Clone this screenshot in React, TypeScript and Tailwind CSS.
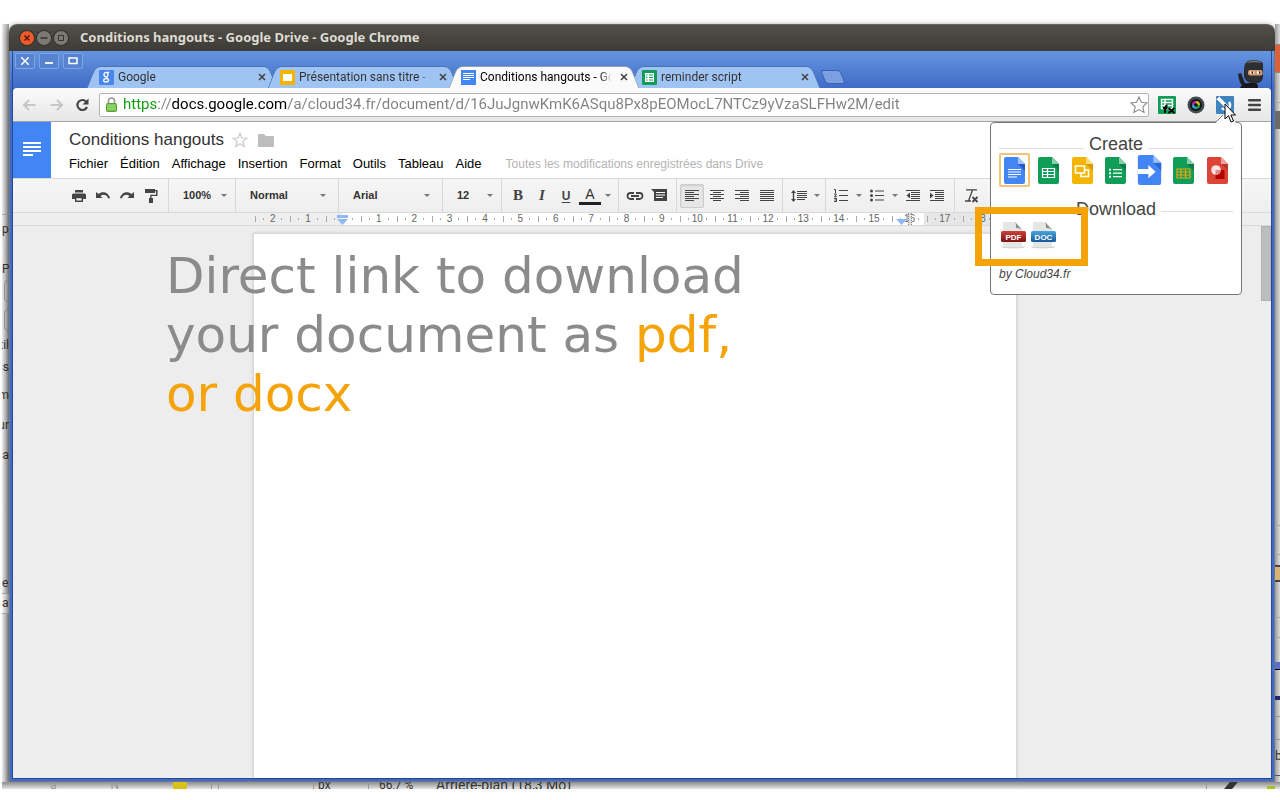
import type { ReactNode } from "react";

const ui = "font-['Roboto',sans-serif]";
const docs = "font-['Liberation_Sans',sans-serif]";

const createItems = [
  { label: "Document", color: "#4285f4", fold: "#a1c2fa", shade: "#2a56c6", art: "doc" },
  { label: "Spreadsheet", color: "#0f9d58", fold: "#87ceac", shade: "#0b7f47", art: "sheet" },
  { label: "Presentation", color: "#f4b400", fold: "#fada80", shade: "#d79c00", art: "slides" },
  { label: "Form", color: "#0f9d58", fold: "#87ceac", shade: "#0b7f47", art: "form" },
  { label: "Script", color: "#4285f4", fold: "#a1c2fa", shade: "#2a66d6", art: "script" },
  { label: "Fusion table", color: "#0f9d58", fold: "#87ceac", shade: "#0b7f47", art: "table" },
  { label: "Drawing", color: "#db4437", fold: "#eda29b", shade: "#b6392e", art: "drawing" },
];

const menus = ["Fichier", "Édition", "Affichage", "Insertion", "Format", "Outils", "Tableau", "Aide"];

const rulerLabels = ["2", "1", "", ...Array.from({ length: 18 }, (_, i) => String(i + 1))];

function Lines({ rows }: { rows: [number, number][] }) {
  return (
    <svg viewBox="0 0 14 12" className="h-3 w-3.5" fill="#444" shapeRendering="crispEdges">
      {rows.map(([x, w], i) => (
        <rect key={i} x={x} y={i * 2} width={w} height="1" />
      ))}
    </svg>
  );
}

function Caret() {
  return (
    <svg viewBox="0 0 6 3" className="h-[3px] w-1.5 shrink-0" fill="#777">
      <path d="M0 0h6L3 3z" />
    </svg>
  );
}

function Tool({ label, active, children }: { label: string; active?: boolean; children: ReactNode }) {
  return (
    <button
      aria-label={label}
      className={`flex h-6 w-6 shrink-0 items-center justify-center rounded-xs ${
        active ? "border border-[#ccc] bg-[#e6e6e6] shadow-[inset_0_1px_2px_rgba(0,0,0,0.1)]" : ""
      }`}
    >
      {children}
    </button>
  );
}

function CaretButton({ label }: { label: string }) {
  return (
    <button aria-label={label} className="flex h-6 w-3 shrink-0 items-center justify-center">
      <Caret />
    </button>
  );
}

function Picker({ label, value, className }: { label: string; value: string; className: string }) {
  return (
    <label className={`flex shrink-0 items-center border-r border-[#d8d8d8] pl-3.5 ${className}`}>
      <select aria-label={label} className="min-w-0 flex-1 appearance-none text-[11px] font-bold text-[#333]">
        <option>{value}</option>
      </select>
      <Caret />
    </label>
  );
}

function DocFavicon() {
  return (
    <svg viewBox="0 0 15 15" className="size-[15px] shrink-0" shapeRendering="crispEdges">
      <rect width="15" height="15" fill="#4285f4" />
      <path d="M2 3h11v1H2zM2 5h11v1H2zM2 7h11v1H2zM2 9h7v1H2z" fill="#fff" />
    </svg>
  );
}

function SheetFavicon() {
  return (
    <svg viewBox="0 0 15 15" className="size-[15px] shrink-0">
      <rect width="15" height="15" rx="1" fill="#0f9d58" />
      <path d="M3 3h9v9H3z" fill="#fff" />
      <path d="M4 4.500h1.500v1H4zM7 4.500h4v1H7zM4 7h1.500v1H4zM7 7h4v1H7zM4 9.500h1.500v1H4zM7 9.500h4v1H7z" fill="#0f9d58" />
    </svg>
  );
}

function SlidesFavicon() {
  return (
    <svg viewBox="0 0 15 15" className="size-[15px] shrink-0">
      <rect width="15" height="15" rx="1" fill="#f4b400" />
      <path d="M3 4h9v7H3z" fill="#fff" />
    </svg>
  );
}

function GoogleFavicon() {
  return (
    <svg viewBox="0 0 15 15" className="size-[15px] shrink-0">
      <rect width="15" height="15" rx="1" fill="#4a86ea" />
      <g fill="none" stroke="#fff" strokeWidth="1.300">
        <ellipse cx="7" cy="4.600" rx="2" ry="2.200" />
        <path d="M8 2.400h2.200M8 6.800c-1.500 1 1.800 1.600 1.600 3.500-.3 2.200-5 2.200-5 .2 0-1.500 2-2 4-1.800" />
      </g>
    </svg>
  );
}

function Tab({ icon, title, active }: { icon: ReactNode; title: string; active?: boolean }) {
  const side = active ? "border-[#8f9db5] bg-[#fafafa]" : "border-[#4a72b5] bg-[#9fc4f3]";
  return (
    <div className={`relative flex h-[22px] w-[181px] shrink-0 items-center pr-1.5 pl-2 ${active ? "z-10" : ""}`}>
      <div className={`absolute inset-y-0 left-0 w-1/2 -skew-x-[22deg] rounded-tl-md border-t border-l ${side}`} />
      <div className={`absolute inset-y-0 right-0 w-1/2 skew-x-[22deg] rounded-tr-md border-t border-r ${side}`} />
      <div className={`absolute inset-x-6 inset-y-0 border-t ${side}`} />
      <button className="relative flex min-w-0 flex-1 items-center gap-1">
        {icon}
        <span
          className={`min-w-0 flex-1 overflow-hidden mask-r-from-90% text-left text-[12px] leading-4 whitespace-nowrap ${
            active ? "text-black" : "text-[#333]"
          }`}
        >
          {title}
        </span>
      </button>
      <button aria-label="Close tab" className="relative ml-2 shrink-0">
        <svg viewBox="0 0 8 8" className="size-2" stroke="#444" strokeWidth="1.600">
          <path d="M1 1l6 6M7 1L1 7" />
        </svg>
      </button>
    </div>
  );
}

function Ninja() {
  return (
    <svg viewBox="0 0 28 28" className="h-7 w-7">
      <path d="M7 10c0-6 2-9 6-9.500 6-.6 12 .2 13 3v13c0 4-3 7-8 7-6 0-11-3-11-8z" fill="#2b2e33" />
      <path d="M9 3c4-3 12-3 16 0-5-1-10-1-16 0z" fill="#777" />
      <rect x="11" y="10" width="14.500" height="5.500" rx="2" fill="#d79a6d" />
      <path d="M13 11.500h4v2h-4zM20 11.500h4v2h-4z" fill="#fff" />
      <path d="M14.500 11.500h1.500v2h-1.500zM22 11.500h1.500v2H22z" fill="#111" />
      <path d="M1 14l3-1 3 8 2 3-3 3c-3-3-4-7-5-13z" fill="#222" />
      <path d="M3 28c2-4 6-5 10-5h6c2 1 2 3 2 5z" fill="#17181a" />
    </svg>
  );
}

function FileArt({ art }: { art: string }) {
  switch (art) {
    case "doc":
      return <path d="M4 12.500h13M4 15h13M4 17.500h13M4 20h9" stroke="#fff" strokeWidth="1.200" />;
    case "sheet":
      return <path d="M4.500 11.500h12v9h-12zM4.500 14.500h12M4.500 17.500h12M9.500 11.500v9" stroke="#fff" strokeWidth="1.200" fill="none" />;
    case "slides":
      return <path d="M3.500 9h9v7h-9zM9 16v3.500h7.500v-6.500h-4" stroke="#fff" strokeWidth="1.600" fill="none" />;
    case "form":
      return (
        <g fill="#fff">
          <path d="M8 12h9v1.300H8zM8 15.500h9v1.300H8zM8 19h9v1.300H8z" />
          <path d="M4 11.800h2v2H4zM4 15.200h2v2H4zM4 18.700h2v2H4z" />
        </g>
      );
    case "script":
      return <path d="M0 12.700h9.500V9l6.500 6-6.500 6v-4H0z" fill="#fff" />;
    case "table":
      return <path d="M4 12h13v9H4zM4 15h13M4 18h13M8 12v9M12.500 12v9" stroke="#e8a712" strokeWidth="1.200" fill="none" />;
    default:
      return (
        <g>
          <rect x="8.500" y="13" width="9" height="9" fill="#b50000" />
          <circle cx="9" cy="13" r="4.800" fill="#fbe3e1" />
          <path d="M8.500 17.800V13h5.300a4.800 4.800 0 0 1-5.300 4.800z" fill="#dc8b85" />
        </g>
      );
  }
}

function DownloadIcon({ text, from, to, id }: { text: string; from: string; to: string; id: string }) {
  return (
    <svg viewBox="0 0 26 28" className="h-7 w-[26px]">
      <defs>
        <linearGradient id={id} x1="0" y1="0" x2="0" y2="1">
          <stop offset="0" stopColor={from} />
          <stop offset="1" stopColor={to} />
        </linearGradient>
      </defs>
      <ellipse cx="13" cy="26" rx="12" ry="1.500" fill="#d5d5d5" />
      <path d="M3 1h13l6 7v18H3z" fill="#e6e6e6" />
      <path d="M15 1l7 8c-3-2-4-2-6-2 0-3 0-4-1-6z" fill="#8a8a8a" />
      <rect x="1" y="10" width="25" height="11" rx="1.500" fill={`url(#${id})`} />
      <text x="13.500" y="18.500" textAnchor="middle" fill="#fff" className="font-['Liberation_Sans',sans-serif] text-[8px] font-bold">
        {text}
      </text>
    </svg>
  );
}

function ExtensionPopup() {
  return (
    <div className={`absolute top-0 right-[29px] z-20 w-[252px] rounded-sm border border-[#777] bg-white px-2 pb-3 text-[#444] ${docs}`}>
      <svg viewBox="0 0 22 8" className="absolute -top-2 right-1 h-2 w-[22px]">
        <path d="M0 8l8-8 14 8z" fill="#fff" />
        <path d="M0 8l8-8" stroke="#777" />
      </svg>
      <div className="mt-[9px] flex items-center gap-[5px]">
        <hr className="mt-2 flex-1 border-[#ddd]" />
        <h2 className="text-[18px] leading-6">Create</h2>
        <hr className="mt-2 flex-1 border-[#ddd]" />
      </div>
      <div className="-mt-[3px] flex justify-between">
        {createItems.map((item, i) => (
          <button
            key={item.label}
            aria-label={item.label}
            className={`flex h-[34px] w-[31px] items-center justify-center rounded-xs ${i === 0 ? "border-2 border-[#f3c477]" : ""}`}
          >
            <svg viewBox="0 0 21 27" className={`shrink-0 ${item.art === "script" ? "h-[30px] w-[25px]" : "h-[27px] w-[21px]"}`}>
              <path d="M2 0h12l7 7v18a2 2 0 0 1-2 2H2a2 2 0 0 1-2-2V2a2 2 0 0 1 2-2z" fill={item.color} />
              <path d="M14 7h7v7z" fill={item.shade} />
              <path d="M14 0l7 7h-7z" fill={item.fold} />
              <FileArt art={item.art} />
            </svg>
          </button>
        ))}
      </div>
      <div className="mt-2.5 flex items-center gap-[5px]">
        <hr className="mt-1 flex-1 border-[#ddd]" />
        <h2 className="text-[18px] leading-6">Download</h2>
        <hr className="mt-1 flex-1 border-[#ddd]" />
      </div>
      <div className="flex gap-1 pl-px">
        <button aria-label="Download as PDF">
          <DownloadIcon id="pdf" text="PDF" from="#d0403b" to="#7d1213" />
        </button>
        <button aria-label="Download as DOC">
          <DownloadIcon id="doc" text="DOC" from="#4aa5de" to="#155a9c" />
        </button>
      </div>
      <p className="mt-[17px] text-[12px] leading-4 italic">
        by <a href="#cloud34">Cloud34.fr</a>
      </p>
      {/* Highlight around the download buttons */}
      <div className="absolute top-[84px] -left-4 h-[59px] w-[113px] border-[7px] border-[#f4a30b]" />
    </div>
  );
}

function TitleBar() {
  return (
    <div className="flex h-[27px] shrink-0 items-center rounded-t-lg border-t border-[#66645d] bg-linear-to-b from-[#504f48] to-[#3c3b37] pl-[11px]">
      <div className="flex gap-[3px]">
        <button aria-label="Close" className="size-3.5 rounded-full bg-[#ee5a2c] ring-1 ring-[#33322e]">
          <svg viewBox="0 0 14 14" stroke="#5a1c08" strokeWidth="1.500">
            <path d="M4.500 4.500l5 5M9.500 4.500l-5 5" />
          </svg>
        </button>
        <button aria-label="Minimize" className="size-3.5 rounded-full bg-[#7b7973] ring-1 ring-[#33322e]">
          <svg viewBox="0 0 14 14" stroke="#33322e" strokeWidth="1.500">
            <path d="M3.500 7h7" />
          </svg>
        </button>
        <button aria-label="Maximize" className="size-3.5 rounded-full bg-[#7b7973] ring-1 ring-[#33322e]">
          <svg viewBox="0 0 14 14" stroke="#33322e" fill="none">
            <path d="M4.500 4.500h5v5h-5z" />
          </svg>
        </button>
      </div>
      <h1 className="ml-3 font-['Noto_Sans',sans-serif] text-[13px] font-bold text-[#dfdbd2]">
        Conditions hangouts - Google Drive - Google Chrome
      </h1>
    </div>
  );
}

function TabStrip() {
  const frameButton = "flex h-4 w-5 items-center justify-center rounded-xs border border-[#7da3e0] bg-[#5583d0]";
  return (
    <div className="flex h-[37px] shrink-0 items-end">
      <div className="mt-[2px] flex gap-1 self-start pr-2 pl-0.5">
        <button aria-label="Close window" className={frameButton}>
          <svg viewBox="0 0 8 8" className="size-2" stroke="#fff" strokeWidth="1.500">
            <path d="M0 0l8 8M8 0L0 8" />
          </svg>
        </button>
        <button aria-label="Minimize window" className={frameButton}>
          <svg viewBox="0 0 8 8" className="size-2" stroke="#fff" strokeWidth="1.800">
            <path d="M0 6h8" />
          </svg>
        </button>
        <button aria-label="Restore window" className={frameButton}>
          <svg viewBox="0 0 10 8" className="h-2 w-2.5" stroke="#fff" strokeWidth="1.500" fill="none">
            <path d="M1 1h8v5.500H1z" />
          </svg>
        </button>
      </div>
      <Tab icon={<GoogleFavicon />} title="Google" />
      <Tab icon={<SlidesFavicon />} title="Présentation sans titre - G" />
      <Tab icon={<DocFavicon />} title="Conditions hangouts - Goo" active />
      <Tab icon={<SheetFavicon />} title="reminder script" />
      <button
        aria-label="New tab"
        className="mb-1 ml-2 h-3.5 w-5 skew-x-[22deg] rounded-[3px] border border-[#3a62b0] bg-[#7b9fe0]"
      />
      <div className="mr-1.5 ml-auto">
        <Ninja />
      </div>
    </div>
  );
}

function AddressBar() {
  return (
    <div className="relative flex h-[34px] shrink-0 items-center rounded-t-sm border-b border-[#a3a3a3] bg-linear-to-b from-[#fbfbfb] to-[#e6e6e6] pl-0.5">
      <button aria-label="Back" className="flex w-7 justify-center">
        <svg viewBox="0 0 14 12" className="h-3 w-3.5" stroke="#c6c6c6" strokeWidth="2" fill="none">
          <path d="M13.500 6H2M7 1L2 6l5 5" />
        </svg>
      </button>
      <button aria-label="Forward" className="flex w-7 justify-center">
        <svg viewBox="0 0 14 12" className="h-3 w-3.5" stroke="#c6c6c6" strokeWidth="2" fill="none">
          <path d="M.5 6H12M7 1l5 5-5 5" />
        </svg>
      </button>
      <button aria-label="Reload" className="flex w-7 justify-center">
        <svg viewBox="0 0 14 14" className="mr-1.5 size-3.5" fill="none">
          <path d="M11 3.500A5 5 0 1 0 12 9" stroke="#444" strokeWidth="2.200" />
          <path d="M13.500.5V6.500h-6z" fill="#444" />
        </svg>
      </button>
      <div className="flex h-6 min-w-0 flex-1 items-center rounded-xs border border-[#b5b5b5] bg-white pl-1.5">
        <svg viewBox="0 0 11 15" className="mr-1.5 h-[15px] w-[11px] shrink-0">
          <path d="M2.500 7V4a3 3 0 0 1 6 0v3" stroke="#999" strokeWidth="1.600" fill="none" />
          <rect x=".5" y="6.500" width="10" height="8" rx="1" fill="#7cc653" stroke="#55a12f" />
          <path d="M1.500 9h8M1.500 11.500h8" stroke="#a5dc85" />
        </svg>
        <input
          aria-label="Address"
          defaultValue="https://docs.google.com/a/cloud34.fr/document/d/16JuJgnwKmK6ASqu8Px8pEOMocL7NTCz9yVzaSLFHw2M/edit"
          className="min-w-0 flex-1 bg-[linear-gradient(90deg,#0a9a0a_35px,#808080_35px,#808080_49px,#000_49px,#000_164px,#808080_164px)] bg-clip-text text-[15px] text-transparent outline-none"
        />
        <button aria-label="Bookmark">
          <svg viewBox="0 0 18 18" className="size-[18px]" fill="#fff" stroke="#8a8a8a" strokeWidth="1.100">
            <path d="M9 1l2.400 5.300 5.700.6-4.300 3.900 1.200 5.700L9 13.600l-5 2.900 1.200-5.700L.9 6.900l5.700-.6z" />
          </svg>
        </button>
      </div>
      <div className="flex items-center gap-[11px] pr-2.5 pl-[9px]">
        <button aria-label="Spreadsheet functions">
          <svg viewBox="0 0 18 18" className="size-[18px]">
            <rect width="18" height="18" rx="1" fill="#0f9d58" />
            <path d="M3.500 3.500h11v9h-11zM3.500 6.500h11M3.500 9.500h11M7 3.500v9" fill="none" stroke="#fff" strokeWidth="1.400" />
            <path d="M9.500 9.500c-2 0-2.500 1-2.500 7.500M5 12h4.500M10.500 12l6 5M16.500 12l-6 5" stroke="#000" strokeWidth="1.900" fill="none" />
          </svg>
        </button>
        <button aria-label="Color picker">
          <svg viewBox="0 0 18 18" className="size-[18px]">
            <circle cx="9" cy="9" r="8.500" fill="#444a4e" />
            <circle cx="9" cy="9" r="6" fill="#15161a" />
            <path d="M9 9V5a4 4 0 0 1 4 4z" fill="#d8c21c" />
            <path d="M9 9h4a4 4 0 0 1-4 4z" fill="#20a050" />
            <path d="M9 9v4a4 4 0 0 1-4-4z" fill="#1cb5d8" />
            <path d="M9 9H5a4 4 0 0 1 4-4z" fill="#c923a8" />
            <circle cx="9" cy="9" r="1.800" fill="#111" />
          </svg>
        </button>
        <button aria-label="Cloud34 tools">
          <svg viewBox="0 0 18 18" className="size-[18px]">
            <rect width="18" height="18" rx="1" fill="#3f83c0" />
            <path d="M2 2l9 9" stroke="#fff" strokeWidth="3.500" />
            <path d="M0 4l4-4v4z" fill="#fff" />
            <path d="M13 6a4.500 4.500 0 1 1-7 6" fill="none" stroke="#fff" strokeWidth="2.500" />
          </svg>
        </button>
        <button aria-label="Menu" className="ml-[3px]">
          <svg viewBox="0 0 13 12" className="h-3 w-[13px]" fill="#444">
            <rect width="13" height="2.500" rx="1" />
            <rect y="4.700" width="13" height="2.500" rx="1" />
            <rect y="9.400" width="13" height="2.500" rx="1" />
          </svg>
        </button>
      </div>
      {/* Mouse pointer */}
      <svg viewBox="0 0 12 20" className="absolute top-[15px] right-[35px] z-30 h-5 w-3">
        <path d="M1 1v15l3.500-3.300L7 19l2.500-1-2.600-6H11.500z" fill="#fff" stroke="#000" />
      </svg>
    </div>
  );
}

function DocsHeader() {
  return (
    <header className="flex h-14 shrink-0 bg-white">
      <a href="#docs" aria-label="Docs home" className="flex w-[38px] shrink-0 justify-center bg-[#4285f4] pt-5">
        <svg viewBox="0 0 18 14" className="h-3.5 w-[18px]" fill="#fff" shapeRendering="crispEdges">
          <path d="M0 0h18v2H0zM0 4h18v2H0zM0 8h18v2H0zM0 12h10v2H0z" />
        </svg>
      </a>
      <div className="pt-1.5 pl-[18px]">
        <div className="flex items-center">
          <h2 className="text-[17px] leading-6 text-[#333]">Conditions hangouts</h2>
          <button aria-label="Star" className="ml-2">
            <svg viewBox="0 0 18 18" className="size-4" fill="none" stroke="#c8c8c8" strokeWidth="1.300">
              <path d="M9 1.500l2 5.200 5.700.3-4.400 3.600 1.400 5.600L9 13.100l-4.700 3.100 1.400-5.600L1.300 7l5.700-.3z" />
            </svg>
          </button>
          <button aria-label="Move to folder" className="ml-2.5">
            <svg viewBox="0 0 16 14" className="h-3.5 w-4" fill="#bdbdbd">
              <path d="M0 2a1 1 0 0 1 1-1h5l2 2h7a1 1 0 0 1 1 1v9a1 1 0 0 1-1 1H1a1 1 0 0 1-1-1z" />
            </svg>
          </button>
        </div>
        <nav className="mt-1 flex gap-3 text-[13px] leading-4 text-black">
          {menus.map((menu) => (
            <button key={menu}>{menu}</button>
          ))}
          <span className="ml-3 text-[12px] text-[#b3b3b3]">Toutes les modifications enregistrées dans Drive</span>
        </nav>
      </div>
    </header>
  );
}

function Toolbar() {
  const group = "flex shrink-0 items-center border-r border-[#d8d8d8]";
  return (
    <div className="flex h-[34px] shrink-0 border-t border-[#d9d9d9] bg-linear-to-b from-[#f6f6f6] to-[#eee]">
      <div className={`${group} w-[156px] pl-[54px]`}>
        <Tool label="Imprimer">
          <svg viewBox="0 0 14 12" className="h-3 w-3.5" fill="#444">
            <path d="M3 0h8v2.500H3zM1.500 3.500h11A1.500 1.500 0 0 1 14 5v4h-3V7H3v2H0V5a1.500 1.500 0 0 1 1.500-1.500z" />
            <path d="M3.700 7.500h6.600v3.800H3.700z" fill="#f4f4f4" stroke="#444" strokeWidth="1.400" />
          </svg>
        </Tool>
        <Tool label="Annuler">
          <svg viewBox="0 0 14 9" className="h-[9px] w-3.5" fill="#444">
            <path d="M0 1l2.500 2C6 0 12 .5 14 7l-1.800.6C11 3.500 7 3 4.500 5L6.500 7H0z" />
          </svg>
        </Tool>
        <Tool label="Rétablir">
          <svg viewBox="0 0 14 9" className="h-[9px] w-3.5" fill="#444">
            <path d="M14 1l-2.500 2C8 0 2 .5 0 7l1.800.6C3 3.500 7 3 9.500 5L7.500 7H14z" />
          </svg>
        </Tool>
        <Tool label="Copier la mise en forme">
          <svg viewBox="0 0 14 14" className="size-3.5" fill="#444">
            <path d="M1 0h10v1h2.500v6H7.500v2H9v5H5V9h1.200V5.800H12V2.300h-1V4H1z" />
          </svg>
        </Tool>
      </div>
      <Picker label="Zoom" value="100%" className="w-[67px] pr-2" />
      <Picker label="Style" value="Normal" className="w-[103px] pr-3" />
      <Picker label="Police" value="Arial" className="w-[104px] pr-3" />
      <Picker label="Taille" value="12" className="w-[59px] pr-2" />
      <div className={`${group} w-[117px] pl-1`}>
        <Tool label="Gras">
          <span className="font-['Liberation_Serif',serif] text-[15px] font-bold text-[#444]">B</span>
        </Tool>
        <Tool label="Italique">
          <span className="font-['Liberation_Serif',serif] text-[15px] font-bold text-[#444] italic">I</span>
        </Tool>
        <Tool label="Souligner">
          <span className="text-[12px] font-bold text-[#444] underline underline-offset-2">U</span>
        </Tool>
        <Tool label="Couleur du texte">
          <span className="border-b-3 border-[#222] px-1.5 text-[14px] leading-[15px] text-[#333]">A</span>
        </Tool>
        <CaretButton label="Choisir une couleur" />
      </div>
      <div className={`${group} w-[58px] pl-1`}>
        <Tool label="Lien">
          <svg viewBox="0 0 18 8" className="h-2 w-[18px]" fill="none" stroke="#444" strokeWidth="1.800">
            <path d="M8 1H4.500a3 3 0 0 0 0 6H8M10 1h3.500a3 3 0 0 1 0 6H10M5 4h8" />
          </svg>
        </Tool>
        <Tool label="Commentaire">
          <svg viewBox="0 0 16 14" className="h-3.5 w-4 shrink-0" fill="#444">
            <path d="M0 0h16v12H3V3z" />
            <path d="M5 3h9v1H5zM5 5.500h9v1H5zM5 8h7v1H5z" fill="#fff" />
          </svg>
        </Tool>
      </div>
      <div className={`${group} w-[106px] gap-px pl-[3px]`}>
        <Tool label="Aligner à gauche" active>
          <Lines rows={[[0, 14], [0, 9], [0, 14], [0, 9], [0, 14], [0, 9]]} />
        </Tool>
        <Tool label="Centrer">
          <Lines rows={[[0, 14], [3, 8], [0, 14], [3, 8], [0, 14], [3, 8]]} />
        </Tool>
        <Tool label="Aligner à droite">
          <Lines rows={[[0, 14], [5, 9], [0, 14], [5, 9], [0, 14], [5, 9]]} />
        </Tool>
        <Tool label="Justifier">
          <Lines rows={[[0, 14], [0, 14], [0, 14], [0, 14], [0, 14], [0, 14]]} />
        </Tool>
      </div>
      <div className={`${group} w-[43px] pl-1`}>
        <Tool label="Interligne">
          <svg viewBox="0 0 16 12" className="h-3 w-4" fill="#444">
            <path d="M2.500 0L5 3H3.200v6H5l-2.500 3L0 9h1.800V3H0z" />
            <path d="M6 1h10v1H6zM6 3h10v1H6zM6 5h10v1H6zM6 7h10v1H6zM6 9h8v1H6z" />
          </svg>
        </Tool>
        <CaretButton label="Choisir un interligne" />
      </div>
      <div className={`${group} w-[129px] pl-[3px]`}>
        <Tool label="Liste numérotée">
          <svg viewBox="0 0 14 13" className="h-[13px] w-3.5">
            <path d="M5 1.500h9M5 6.500h9M5 11.500h9" stroke="#444" />
            <path d="M0 .5h1.500V4M0 5h2.500L.5 7.800H3M0 9.500h2.500v3H0M.5 11h2" fill="none" stroke="#444" />
          </svg>
        </Tool>
        <CaretButton label="Choisir une liste numérotée" />
        <Tool label="Liste à puces">
          <svg viewBox="0 0 14 13" className="h-[13px] w-3.5" fill="#444">
            <path d="M5 1.500h9v1H5zM5 6h9v1H5zM5 10.500h9v1H5z" />
            <circle cx="1.500" cy="2" r="1.500" />
            <circle cx="1.500" cy="6.500" r="1.500" />
            <circle cx="1.500" cy="11" r="1.500" />
          </svg>
        </Tool>
        <CaretButton label="Choisir des puces" />
        <Tool label="Diminuer le retrait">
          <svg viewBox="0 0 14 12" className="h-3 w-3.5" fill="#444">
            <path d="M0 0h14v1H0zM5 2h9v1H5zM5 4h9v1H5zM5 6h9v1H5zM5 8h9v1H5zM0 10h14v1H0zM4 2.500v6L.5 5.500z" />
          </svg>
        </Tool>
        <Tool label="Augmenter le retrait">
          <svg viewBox="0 0 14 12" className="h-3 w-3.5" fill="#444">
            <path d="M0 0h14v1H0zM5 2h9v1H5zM5 4h9v1H5zM5 6h9v1H5zM5 8h9v1H5zM0 10h14v1H0zM0 2.500v6l3.500-3z" />
          </svg>
        </Tool>
      </div>
      <div className="flex items-center pl-1">
        <Tool label="Supprimer la mise en forme">
          <svg viewBox="0 0 14 14" className="size-3.5" fill="none" stroke="#444">
            <path d="M2 .8h11M8.500 1L4.500 12M1 12h6" strokeWidth="1.300" />
            <path d="M8.500 8l5 5M13.500 8l-5 5" strokeWidth="1.800" />
          </svg>
        </Tool>
      </div>
    </div>
  );
}

function Ruler() {
  return (
    <div className="h-3.5 shrink-0 border-y border-[#d9d9d9] bg-[#eee] pr-[15px]">
      <div className="relative mx-auto h-full w-[763px] bg-[linear-gradient(90deg,#eee_89px,#fff_89px,#fff_671px,#e6e6e6_671px)] pr-[18px] pl-0.5">
        <div className="flex h-full text-[10px] leading-3 text-[#666]">
          {rulerLabels.map((label, i) => (
            <div key={i} className="relative flex flex-1 items-center justify-between px-2">
              <span className="absolute left-0 h-1.5 w-px bg-[#aaa]" />
              <span className="h-0.5 w-px bg-[#aaa]" />
              <span>{label}</span>
              <span className="h-0.5 w-px bg-[#aaa]" />
            </div>
          ))}
        </div>
        {/* Indent markers */}
        <svg viewBox="0 0 11 10" className="absolute top-0.5 left-[84px] h-2.5 w-[11px]" fill="#8fb8f8">
          <path d="M0 0h11v3H0zM0 4h11L5.500 10z" />
        </svg>
        <svg viewBox="0 0 11 6" className="absolute top-1.5 left-[643px] h-1.5 w-[11px]" fill="#8fb8f8">
          <path d="M0 0h11L5.500 6z" />
        </svg>
        <div className="absolute top-0 left-[655px] h-3 w-1 border-x border-dotted border-[#888] bg-[#ddd]" />
      </div>
    </div>
  );
}

function Editor() {
  return (
    <main className="relative flex flex-1 flex-col bg-[#ededed] pt-[7px] pr-[15px]">
      <div className="mx-auto w-[764px] flex-1 border border-b-0 border-[#d8d8d8] bg-white shadow-[0_0_3px_rgba(0,0,0,0.15)]" />
      <div className="absolute top-0 right-0 h-[75px] w-2.5 border border-[#b0b0b0] bg-[#bdbdbd]" />
      {/* Caption drawn across the page */}
      <p className="absolute top-[21px] left-[153px] font-['DejaVu_Sans',sans-serif] text-[50px] leading-[59px] text-[#8b8b8b]">
        Direct link to download
        <br />
        your document as <span className="text-[#f4a30b]">pdf,</span>
        <br />
        <span className="text-[#f4a30b]">or docx</span>
      </p>
    </main>
  );
}

function LeftSliver() {
  const line = "flex items-center justify-end leading-4";
  return (
    <div className="w-[7px] shrink-0 overflow-hidden bg-linear-to-r from-[#ececec] to-[#9c9c9c] text-[12px] text-[#333]">
      <div className="h-[191px] border-b border-[#aaa]" />
      <div className="h-8 pt-1.5 leading-4">p</div>
      <div className="h-[29px] pt-3.5 leading-4">P</div>
      <div className="mt-1 ml-0.5 h-[22px] w-5 rounded-sm border border-[#999]" />
      <div className="mt-[7px] ml-0.5 h-[22px] w-5 rounded-sm border border-[#999]" />
      <div className={`${line} mt-1.5`}>til</div>
      <div className={`${line} mt-1.5`}>ss</div>
      <div className={`${line} mt-3`}>m</div>
      <div className={`${line} mt-3.5`}>ur</div>
      <div className={`${line} mt-3.5`}>ca</div>
      <div className="mt-28 leading-4">e</div>
      <div className="mt-0.5 h-[21px] border-y border-[#aaa] bg-white/40 leading-[19px]">ai</div>
    </div>
  );
}

function RightSliver() {
  return (
    <div className="w-[5px] shrink-0 overflow-hidden bg-linear-to-r from-[#9c9c9c] to-[#dcdcdc] text-[12px] text-[#333]">
      <div className="h-5" />
      <div className="h-[29px] border-y border-[#888] bg-[#d9623a]" />
      <div className="h-[30px] border-b border-[#aaa]" />
      <div className="mt-2 h-[18px] bg-[#6a6a6a]" />
      <div className="h-[397px] border-b border-[#aaa]" />
      <div className="h-[29px] border-b border-[#aaa]" />
      <div className="mt-2.5 h-[17px] border-y-2 border-[#444] bg-[#d8b273]" />
      <div className="h-9 border-b border-[#aaa]" />
      <div className="h-5 border-b border-[#aaa]" />
      <div className="mt-6 h-2 border-b border-black bg-[#5c6fc4]" />
      <div className="mt-[26px] h-1 bg-[#22286b]" />
      <div className="mt-4 h-6 border-y border-[#999]" />
      <div className="mt-1 h-8 border-b border-[#555] leading-6">b</div>
    </div>
  );
}

function BottomSliver() {
  return (
    <div className="flex h-[7px] shrink-0 overflow-hidden bg-linear-to-b from-[#8c8c8c] to-[#e6e6e6] pl-12 text-[12px] leading-[6px] whitespace-nowrap text-[#333]">
      <div className="flex w-[137px] justify-between">
        <span className="text-[#999]">a</span>
        <span className="text-[#999]">N</span>
        <span className="h-full w-3.5 bg-[#d9c11c]" />
      </div>
      <div className="ml-6 w-px bg-[#999]" />
      <div className="ml-1.5 w-24 border-x border-[#999]" />
      <span className="ml-1 w-[50px]">px&nbsp;&nbsp;&nbsp;&nbsp;&nbsp;_</span>
      <span className="w-[60px] border-l border-[#999] pl-2.5">66,7 %&nbsp;&nbsp;_</span>
      <span className="ml-2 text-[14px]">Arrière-plan (18,3 Mo)</span>
      <div className="ml-auto flex w-[74px] gap-4 border-l border-[#999] pl-5">
        <span className="h-full w-2 -skew-x-[40deg] bg-[#333]" />
        <span className="mt-1 ml-4 size-2 bg-[#a8c424]" />
      </div>
    </div>
  );
}

export default function App() {
  return (
    <div className={`flex min-h-screen flex-col bg-white pt-6 pb-[11px] pl-0.5 ${ui}`}>
      <div className="flex flex-1">
        <LeftSliver />
        <div className="flex min-w-0 flex-1 flex-col rounded-t-lg shadow-[0_2px_6px_rgba(0,0,0,0.6)]">
          <TitleBar />
          <div className="flex flex-1 flex-col border-x border-b border-[#6d7890] bg-[linear-gradient(#6595e0,#3f6cc8_37px,#3f6cc8)] px-0.5 pb-0.5">
            <div className="flex flex-1 flex-col border-x border-b border-[#27498f]">
              <TabStrip />
              <AddressBar />
              <div className={`relative flex flex-1 flex-col ${docs}`}>
                <DocsHeader />
                <Toolbar />
                <Ruler />
                <Editor />
                <ExtensionPopup />
              </div>
            </div>
          </div>
        </div>
        <RightSliver />
      </div>
      <BottomSliver />
    </div>
  );
}
